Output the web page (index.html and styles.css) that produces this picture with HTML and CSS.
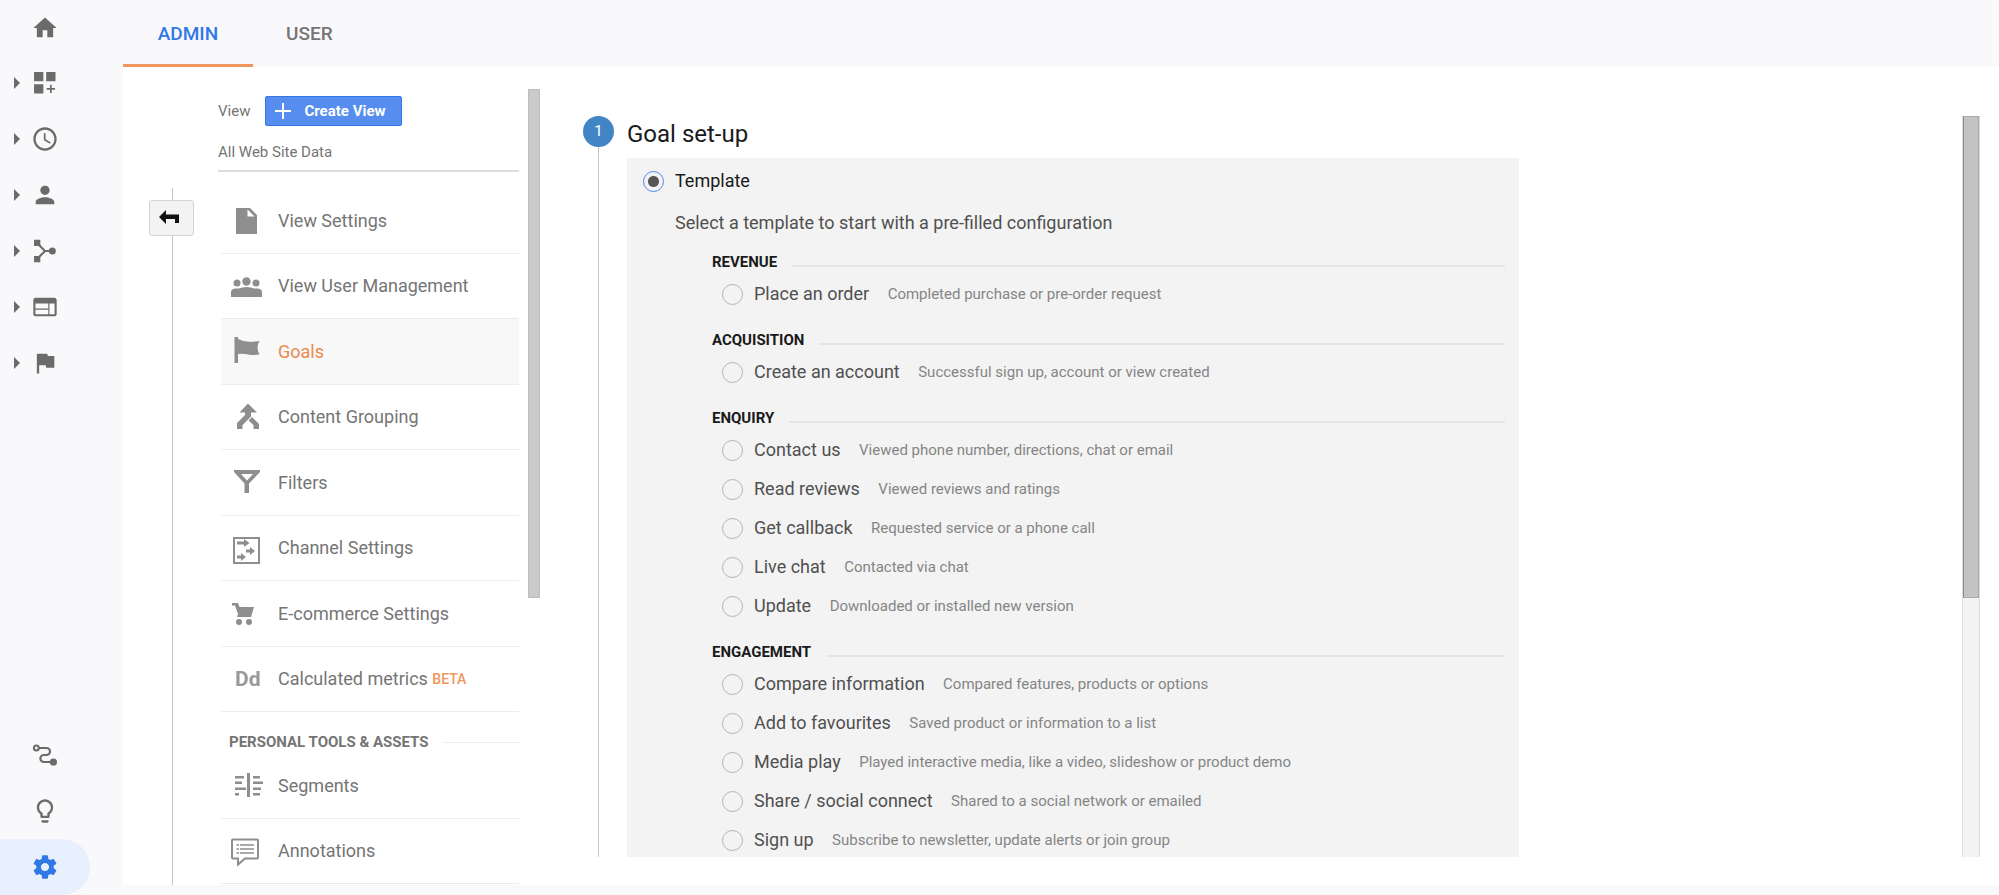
FILE: index.html
```html
<!DOCTYPE html>
<html lang="en">
<head>
  <meta charset="UTF-8">
  <title>Admin - Goals</title>
  <link rel="stylesheet" href="styles.css">
</head>
<body>
  <nav class="rail">
    <a href="#" aria-label="Home"><svg viewBox="0 0 24 24"><path d="M10 20v-6h4v6h5v-8h3L12 3 2 12h3v8z"/></svg></a>
    <a href="#" class="expand" aria-label="Customisation"><svg viewBox="0 0 24 24"><path d="M2.6 2.6h8v8h-8zM13 2.6h8v8h-8zM2.6 13h8v8h-8zM16.3 13.4h1.4v2.9h2.9v1.4h-2.9v2.9h-1.4v-2.9h-2.9v-1.4h2.9z"/></svg></a>
    <a href="#" class="expand" aria-label="Real-time"><svg viewBox="0 0 24 24"><path d="M11.99 2C6.47 2 2 6.48 2 12s4.47 10 9.99 10C17.52 22 22 17.52 22 12S17.52 2 11.99 2zM12 20c-4.42 0-8-3.58-8-8s3.58-8 8-8 8 3.58 8 8-3.58 8-8 8zm.5-13H11v6l5.25 3.15.75-1.23-4.5-2.67z"/></svg></a>
    <a href="#" class="expand" aria-label="Audience"><svg viewBox="0 0 24 24"><path d="M12 12c2.21 0 4-1.79 4-4s-1.79-4-4-4-4 1.79-4 4 1.79 4 4 4zm0 2c-2.67 0-8 1.34-8 4v2h16v-2c0-2.66-5.33-4-8-4z"/></svg></a>
    <a href="#" class="expand" aria-label="Acquisition"><svg viewBox="0 0 24 24"><path d="M2.6 2.3h5.4v5.4H2.6zM2.6 16.3h5.4v5.4H2.6z"/><circle cx="18.3" cy="12" r="3"/><path class="line" d="M6 6l6 6-6 6M12 12h6"/></svg></a>
    <a href="#" class="expand" aria-label="Behaviour"><svg viewBox="0 0 24 24"><path d="M20 4H4c-1.1 0-2 .9-2 2v12c0 1.1.9 2 2 2h16c1.1 0 2-.9 2-2V6c0-1.1-.9-2-2-2zm-5.2 14.2H3.8v-3.9h11zm0-4.9H3.8V9h11zm5.4 4.9h-4.4V9h4.4z"/></svg></a>
    <a href="#" class="expand" aria-label="Conversions"><svg viewBox="0 0 24 24"><path d="M14.4 6L14 4H5v17h2v-7h5.6l.4 2h7V6z"/></svg></a>
    <a href="#" class="bottom" aria-label="Attribution"><svg viewBox="0 0 24 24"><circle class="line" cx="4.6" cy="6" r="2.1"/><circle cx="19.2" cy="18" r="3.1"/><path class="line" d="M7 6h6.3a3 3 0 0 1 0 6H11a3 3 0 0 0 0 6h7"/></svg></a>
    <a href="#" aria-label="Discover"><svg viewBox="0 0 24 24"><path d="M9 21c0 .55.45 1 1 1h4c.55 0 1-.45 1-1v-1H9v1zm3-19C8.14 2 5 5.14 5 9c0 2.38 1.19 4.47 3 5.74V17c0 .55.45 1 1 1h6c.55 0 1-.45 1-1v-2.26c1.81-1.27 3-3.36 3-5.74 0-3.86-3.14-7-7-7zm2.85 11.1l-.85.6V16h-4v-2.3l-.85-.6C7.8 12.16 7 10.63 7 9c0-2.76 2.24-5 5-5s5 2.24 5 5c0 1.63-.8 3.16-2.15 4.1z"/></svg></a>
    <a href="#" class="current" aria-label="Admin"><svg viewBox="0 0 24 24"><path d="M19.43 12.98c.04-.32.07-.64.07-.98s-.03-.66-.07-.98l2.11-1.65c.19-.15.24-.42.12-.64l-2-3.46c-.12-.22-.39-.3-.61-.22l-2.49 1c-.52-.4-1.08-.73-1.69-.98l-.38-2.65C14.46 2.18 14.25 2 14 2h-4c-.25 0-.46.18-.49.42l-.38 2.65c-.61.25-1.17.59-1.69.98l-2.49-1c-.23-.09-.49 0-.61.22l-2 3.46c-.13.22-.07.49.12.64l2.11 1.65c-.04.32-.07.65-.07.98s.03.66.07.98l-2.11 1.65c-.19.15-.24.42-.12.64l2 3.46c.12.22.39.3.61.22l2.49-1c.52.4 1.08.73 1.69.98l.38 2.65c.03.24.24.42.49.42h4c.25 0 .46-.18.49-.42l.38-2.65c.61-.25 1.17-.59 1.69-.98l2.49 1c.23.09.49 0 .61-.22l2-3.46c.12-.22.07-.49-.12-.64l-2.11-1.65zM12 15.5c-1.93 0-3.5-1.57-3.5-3.5s1.57-3.5 3.5-3.5 3.5 1.57 3.5 3.5-1.57 3.5-3.5 3.5z"/></svg></a>
  </nav>

  <main>
    <div class="tabs">
      <a href="#" class="active">ADMIN</a>
      <a href="#">USER</a>
    </div>

    <div class="content">
      <div class="back">
        <button aria-label="Back"><svg viewBox="0 0 20 14"><path d="M0 7l7-7v4.500h13V13h-4V9H7v5z"/></svg></button>
      </div>

      <div class="view">
        <div class="view-head">
          <span>View</span>
          <button class="create"><svg viewBox="0 0 16 16"><path d="M7 0h2v7h7v2H9v7H7V9H0V7h7z"/></svg>Create View</button>
        </div>
        <div class="view-name">All Web Site Data</div>

        <ul class="menu">
          <li><a href="#"><svg viewBox="0 0 32 32"><path fill-rule="evenodd" d="M6 4h14l7 7v19H6zM17.500 5.500v7h7z"/></svg>View Settings</a></li>
          <li><a href="#"><svg viewBox="0 0 32 32"><circle cx="7" cy="13" r="3.500"/><circle cx="16.500" cy="11.500" r="4.200"/><circle cx="26" cy="13" r="3.500"/><path d="M1 27v-5q0-3 4-3.500h4q3-1.500 7.500-1.500t7.500 1.500h4q4 .5 4 3.500v5z"/></svg>View User Management</a></li>
          <li class="selected"><a href="#"><svg viewBox="0 0 32 32"><path d="M4.500 2H8v2q6 3 12 2.700 6 0 9.500-.7-4 6 0 13.500-7 1-11.500 0T8 19v9H4.500z"/></svg>Goals</a></li>
          <li><a href="#"><svg viewBox="0 0 32 32"><path d="M18 2.500l9 9h-6v4L12.500 24v4H7v-6l8-8v-2.500H9.500zM22 16l7 7v5h-5.500v-4L18.500 19.500z"/></svg>Content Grouping</a></li>
          <li><a href="#"><svg viewBox="0 0 32 32"><path fill-rule="evenodd" d="M4 4h26v2l-11 11.500V27h-4.500v-9.500L4 6zM11 8l6 6.500L23 8z"/></svg>Filters</a></li>
          <li><a href="#"><svg viewBox="0 0 32 32"><path class="box" d="M4 6h25v25H4z"/><path d="M7 9.500h7V7l5.500 4-5.500 4v-2.500H7zM16 17.500h4V15l5 4-5 4v-2.500h-4zM7 23.500h4V21l5 4-5 4v-2.500H7z"/></svg>Channel Settings</a></li>
          <li><a href="#"><svg viewBox="0 0 32 32"><path d="M2 6h6l1.500 4H24l-3 10H7l1-3-3-8.500H2z"/><circle cx="9" cy="25" r="3"/><circle cx="19" cy="25" r="3"/></svg>E-commerce Settings</a></li>
          <li><a href="#"><b class="dd">Dd</b>Calculated metrics <small>BETA</small></a></li>
        </ul>

        <h3 class="menu-title">PERSONAL TOOLS &amp; ASSETS</h3>
        <ul class="menu">
          <li><a href="#"><svg viewBox="0 0 32 32"><path d="M17 4h3v24h-3zM5 7h9v2.500H5zM5 12.500h7V15H5zM5 18.500h11V21H5zM5 24h4v2.500H5zM23 7h7v2.500h-7zM23 12.500h10V15H23zM23 18.500h8V21h-8zM23 24h7v2.500h-7z"/></svg>Segments</a></li>
          <li><a href="#"><svg viewBox="0 0 32 32"><path class="box" d="M3 4.500h24q1 0 1 1v17q0 1-1 1H15l-7 6v-6H3q-1 0-1-1v-17q0-1 1-1z"/><path class="soft" d="M6.500 9H9v2H6.500zM10 9h14v2H10zM6.500 13H9v2H6.500zM10 13h14v2H10zM6.500 17H9v2H6.500zM10 17h14v2H10z"/></svg>Annotations</a></li>
        </ul>
      </div>
      <div class="scrollbar"><div class="thumb"></div></div>

      <form class="goal">
        <div class="step"><span>1</span></div>
        <div class="setup">
          <h2>Goal set-up</h2>
          <div class="panel">
            <label class="template"><input type="radio" name="type" checked>Template</label>
            <p>Select a template to start with a pre-filled configuration</p>

            <fieldset>
              <legend>REVENUE</legend>
              <label><input type="radio" name="goal">Place an order <span>Completed purchase or pre-order request</span></label>
            </fieldset>
            <fieldset>
              <legend>ACQUISITION</legend>
              <label><input type="radio" name="goal">Create an account <span>Successful sign up, account or view created</span></label>
            </fieldset>
            <fieldset>
              <legend>ENQUIRY</legend>
              <label><input type="radio" name="goal">Contact us <span>Viewed phone number, directions, chat or email</span></label>
              <label><input type="radio" name="goal">Read reviews <span>Viewed reviews and ratings</span></label>
              <label><input type="radio" name="goal">Get callback <span>Requested service or a phone call</span></label>
              <label><input type="radio" name="goal">Live chat <span>Contacted via chat</span></label>
              <label><input type="radio" name="goal">Update <span>Downloaded or installed new version</span></label>
            </fieldset>
            <fieldset>
              <legend>ENGAGEMENT</legend>
              <label><input type="radio" name="goal">Compare information <span>Compared features, products or options</span></label>
              <label><input type="radio" name="goal">Add to favourites <span>Saved product or information to a list</span></label>
              <label><input type="radio" name="goal">Media play <span>Played interactive media, like a video, slideshow or product demo</span></label>
              <label><input type="radio" name="goal">Share / social connect <span>Shared to a social network or emailed</span></label>
              <label><input type="radio" name="goal">Sign up <span>Subscribe to newsletter, update alerts or join group</span></label>
            </fieldset>
          </div>
        </div>
      </form>
      <div class="scrollbar right"><div class="thumb"></div></div>
    </div>
  </main>
</body>
</html>
```
FILE: styles.css
```css
* { box-sizing: border-box; }
body { margin: 0; display: flex; height: 100vh; overflow: hidden; background: #f9f9fb; font-family: Roboto, sans-serif; font-size: 18px; color: #757575; }
a { color: inherit; text-decoration: none; }
ul { list-style: none; margin: 0; padding: 0; }
svg { display: block; flex: none; fill: currentColor; overflow: visible; }

/* icon rail */
.rail { width: 123px; flex: none; display: flex; flex-direction: column; color: #6b6b6b; }
.rail a { width: 90px; height: 56px; display: flex; align-items: center; padding-left: 31px; border-radius: 0 28px 28px 0; }
.rail svg { width: 28px; height: 28px; }
.rail .line { fill: none; stroke: currentColor; stroke-width: 1.8; }
.rail .expand { padding: 0 0 2px 14px; gap: 11px; }
.rail .expand::before { content: ""; border: 6px solid transparent; border-left-color: #6b6b6b; border-right: 0; }
.rail .bottom { margin-top: auto; }
.rail .current { background: #e8f0fd; color: #2f78e6; }

/* tabs */
main { flex: 1; min-width: 0; display: flex; flex-direction: column; }
.tabs { display: flex; height: 67px; flex: none; font-size: 19px; font-weight: 500; }
.tabs a { padding: 0 33px; line-height: 67px; text-align: center; }
.tabs .active { min-width: 130px; color: #2f78e6; box-shadow: inset 0 -3px #ee965c; }
.content { flex: 1; min-height: 0; display: flex; background: #fff; margin-bottom: 10px; }

/* back button on its line */
.back { width: 45px; flex: none; margin: 121px 24px 0 26px; padding-top: 12px; background: linear-gradient(#c6c6c6, #c6c6c6) 23px 0 / 1px 100% no-repeat; }
.back button { width: 45px; height: 36px; display: grid; place-items: center; padding: 0 6px 3px 0; background: #f3f3f3; border: 1px solid #d4d4d4; border-radius: 3px; color: #111; }
.back svg { width: 20px; height: 14px; }

/* view column */
.view { width: 301px; flex: none; padding-top: 29px; overflow: hidden; }
.view-head { display: flex; align-items: center; gap: 15px; font-size: 15px; height: 30px; }
.create { width: 137px; height: 30px; display: flex; align-items: center; gap: 13px; padding: 0 9px; font: bold 15px Roboto, sans-serif; color: #fff; background: #568dee; border: 1px solid #3277e4; border-radius: 2px; }
.create svg { width: 16px; height: 16px; }
.view-name { height: 46px; padding-top: 16px; line-height: 20px; font-size: 15px; border-bottom: 2px solid #dedede; margin-bottom: 16px; }
.menu { display: grid; grid-auto-rows: 66px 65px; margin-left: 3px; }
.menu li { border-bottom: 1px solid #ececec; }
.menu a { display: flex; align-items: center; height: 100%; padding: 0 0 1px 9px; white-space: pre; }
.menu svg { width: 32px; height: 32px; margin-right: 16px; color: #8e8e8e; }
.menu .box { fill: none; stroke: currentColor; stroke-width: 2; }
.menu .soft { fill: #aaa; }
.menu .dd { width: 43px; margin-left: 5px; font-size: 21px; color: #999; }
.menu small { font-size: 14px; font-weight: 500; color: #ee965c; }
.selected { background: #f8f8f8; color: #ea8a4f; }
.menu-title { display: flex; align-items: center; gap: 14px; margin: 0; padding: 20px 0 0 11px; height: 41px; line-height: 21px; font-size: 15px; font-weight: bold; white-space: nowrap; }
.menu-title::after { content: ""; flex: 1; height: 1px; background: #ececec; }

.scrollbar { width: 12px; flex: none; margin: 22px 0 0 9px; }
.thumb { height: 64%; background: #cacaca; border: 1px solid #bdbdbd; }
.scrollbar.right { width: 18px; margin: 49px 19px 28px 0; background: #f3f3f3; border: 1px solid #dcdcdc; border-width: 0 1px; }
.right .thumb { height: 65%; background: #c3c3c3; border-color: #aaa; border-left-color: #8a8a8a; }

/* goal form */
.goal { flex: 1; min-width: 0; display: flex; margin: 49px 0 28px 43px; overflow: hidden; }
.step { width: 31px; flex: none; margin-right: 13px; background: linear-gradient(#c6c6c6, #c6c6c6) 15px 0 / 1px 100% no-repeat; }
.step span { display: block; height: 31px; line-height: 31px; border-radius: 50%; background: #4285c5; color: #fff; font-size: 15px; text-align: center; }
.setup { width: 892px; }
h2 { margin: 0; height: 42px; line-height: 37px; font-size: 24px; font-weight: 400; color: #1a1a1a; }
.panel { background: #f3f3f3; padding: 3px 14px 0 16px; color: #505050; }
.panel label { display: flex; align-items: center; height: 39px; white-space: pre; }
.panel .template { color: #1a1a1a; }
.panel p { margin: 0 0 0 32px; height: 35px; line-height: 45px; }
.panel input { appearance: none; width: 21px; height: 21px; flex: none; margin: 2px 11px 0 0; border: 1px solid #b4b4b4; border-radius: 50%; }
.panel input:checked { border-color: #4d88ee; background: radial-gradient(circle, #555 5px, transparent 6px); }
fieldset { margin: 0; padding: 0 0 0 69px; border: 0; }
fieldset label { padding-left: 10px; }
fieldset label span { margin-left: 14px; padding-top: 1px; font-size: 15px; color: #858585; }
legend { display: flex; align-items: center; gap: 15px; width: 100%; height: 39px; padding: 14px 0 0; font-size: 15px; font-weight: bold; color: #1a1a1a; }
legend::after { content: ""; flex: 1; height: 2px; margin-top: 8px; background: #e5e5e5; }
```
